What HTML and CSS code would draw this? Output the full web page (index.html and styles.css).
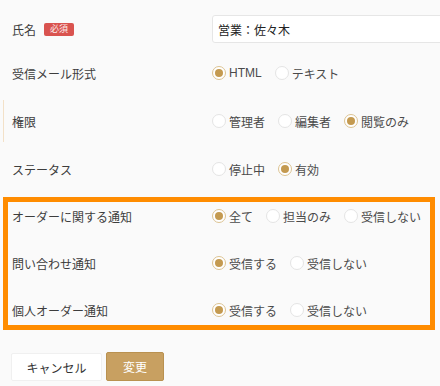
FILE: index.html
```html
<!DOCTYPE html>
<html lang="ja">
<head>
  <meta charset="UTF-8">
  <title>ユーザー編集</title>
  <meta name="viewport" content="width=device-width, initial-scale=1.0">
  <link rel="stylesheet" href="styles.css">
</head>
<body>
  <form class="user-form">
    <div class="row row-name">
      <div class="row-label">氏名 <span class="badge">必須</span></div>
      <div class="row-field">
        <input type="text" class="text-input" value="営業：佐々木">
      </div>
    </div>

    <div class="row">
      <div class="row-label">受信メール形式</div>
      <div class="row-field">
        <label class="radio"><input type="radio" name="mail" checked><span class="dot"></span>HTML</label>
        <label class="radio"><input type="radio" name="mail"><span class="dot"></span>テキスト</label>
      </div>
    </div>

    <div class="row row-marked">
      <div class="row-label">権限</div>
      <div class="row-field">
        <label class="radio"><input type="radio" name="role"><span class="dot"></span>管理者</label>
        <label class="radio"><input type="radio" name="role"><span class="dot"></span>編集者</label>
        <label class="radio"><input type="radio" name="role" checked><span class="dot"></span>閲覧のみ</label>
      </div>
    </div>

    <div class="row">
      <div class="row-label">ステータス</div>
      <div class="row-field">
        <label class="radio"><input type="radio" name="status"><span class="dot"></span>停止中</label>
        <label class="radio"><input type="radio" name="status" checked><span class="dot"></span>有効</label>
      </div>
    </div>

    <div class="notice-group">
      <div class="row">
        <div class="row-label">オーダーに関する通知</div>
        <div class="row-field">
          <label class="radio"><input type="radio" name="order" checked><span class="dot"></span>全て</label>
          <label class="radio"><input type="radio" name="order"><span class="dot"></span>担当のみ</label>
          <label class="radio"><input type="radio" name="order"><span class="dot"></span>受信しない</label>
        </div>
      </div>

      <div class="row">
        <div class="row-label">問い合わせ通知</div>
        <div class="row-field">
          <label class="radio"><input type="radio" name="inquiry" checked><span class="dot"></span>受信する</label>
          <label class="radio"><input type="radio" name="inquiry"><span class="dot"></span>受信しない</label>
        </div>
      </div>

      <div class="row">
        <div class="row-label">個人オーダー通知</div>
        <div class="row-field">
          <label class="radio"><input type="radio" name="personal" checked><span class="dot"></span>受信する</label>
          <label class="radio"><input type="radio" name="personal"><span class="dot"></span>受信しない</label>
        </div>
      </div>
    </div>

    <div class="actions">
      <button type="button" class="btn btn-cancel">キャンセル</button>
      <button type="button" class="btn btn-submit">変更</button>
    </div>
  </form>
</body>
</html>
```

FILE: styles.css
```css
body {
  margin: 0;
  padding: 0;
  background-color: #fafafa;
  color: #3a3a3a;
  font-family: "Liberation Sans", "Noto Sans CJK JP", sans-serif;
  font-size: 12px;
  overflow: hidden;
}

.user-form {
  padding: 15px 0 0 3px;
}

.row {
  display: flex;
  align-items: center;
  height: 28px;
  padding-left: 9px;
  margin-bottom: 20px;
  white-space: nowrap;
}

.row-name {
  margin-bottom: 16px;
}

.row-marked {
  border-left: 1px solid #f3e1c8;
  padding: 7px 0 7px 8px;
  margin: -7px 0 13px;
}

.row-label {
  width: 200px;
  flex-shrink: 0;
  display: flex;
  align-items: center;
  gap: 8px;
  color: #3d3d3d;
}

.badge {
  display: inline-block;
  background-color: #d9534f;
  color: #fbe9e8;
  font-size: 9px;
  line-height: 13px;
  height: 13px;
  padding: 0 6px;
  border-radius: 2px;
}

.row-field {
  display: flex;
  align-items: center;
  flex: 1;
  min-width: 0;
}

.row-name .row-field {
  overflow: hidden;
}

.text-input {
  flex-shrink: 0;
  width: calc(100% + 6px);
  height: 28px;
  box-sizing: border-box;
  border: 1px solid #e6e6e6;
  border-radius: 3px;
  background: #fff;
  padding: 0 5px;
  font-family: inherit;
  font-size: 12px;
  color: #222;
}

.radio {
  display: flex;
  align-items: center;
  flex-shrink: 0;
  margin-right: 13px;
  color: #4a4a4a;
  cursor: pointer;
}

.radio input {
  display: none;
}

.dot {
  flex-shrink: 0;
  width: 14px;
  height: 14px;
  box-sizing: border-box;
  border: 1px solid #e4e4e4;
  border-radius: 50%;
  background: #fff;
  margin-right: 3px;
  position: relative;
}

.radio input:checked + .dot {
  border-color: #dcc392;
}

.radio input:checked + .dot::after {
  content: "";
  position: absolute;
  left: 2px;
  top: 2px;
  width: 8px;
  height: 8px;
  border-radius: 50%;
  background: #c49a50;
}

.notice-group {
  width: 422px;
  height: 123px;
  margin: -1px 0 0 5px;
  outline: 5px solid #ff8c00;
}

.notice-group .row {
  padding-left: 4px;
  margin-bottom: 19px;
}

.actions {
  display: flex;
  gap: 4px;
  padding: 27px 0 0 8px;
}

.btn {
  font-family: inherit;
  font-size: 12px;
  height: 29px;
  border-radius: 2px;
  cursor: pointer;
}

.btn-cancel {
  width: 91px;
  height: 28px;
  background: #fff;
  border: 1px solid #f0f0f0;
  color: #333;
  margin-top: 1px;
}

.btn-submit {
  width: 58px;
  background: #c8a061;
  border: 1px solid #b99150;
  color: #fff;
}
```
